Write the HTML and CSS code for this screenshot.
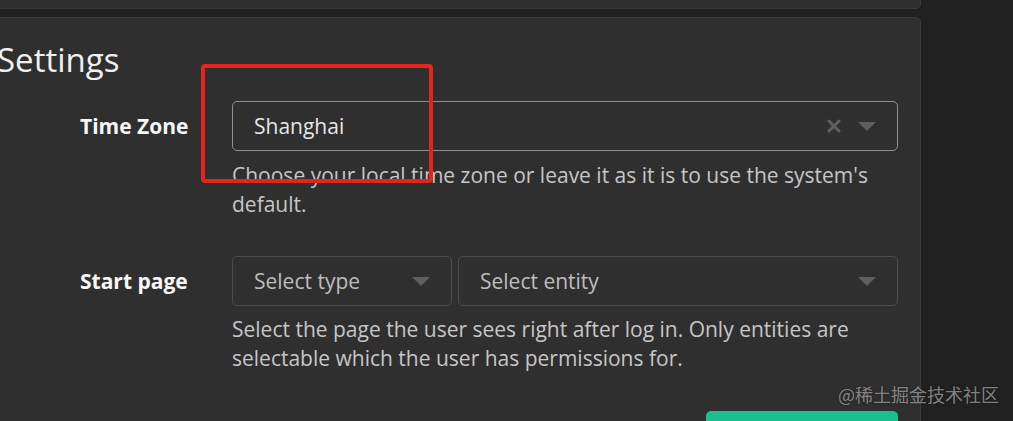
FILE: index.html
```html
<!DOCTYPE html>
<html>
<head>
<meta charset="utf-8">
<link rel="stylesheet" href="styles.css">
</head>
<body>
<div class="page">
  <div class="card card-top"></div>
  <div class="card card-settings">
    <h2 class="title">Settings</h2>
    <div class="form">
      <div class="row">
        <div class="label">Time Zone</div>
        <div class="field">
          <div class="select select-tz">
            <span class="value">Shanghai</span>
            <span class="icons">
              <svg class="clear" width="14" height="14" viewBox="0 0 14 14"><path d="M2 2 L12 12 M12 2 L2 12" stroke="#5f5f5f" stroke-width="3" stroke-linecap="round"/></svg>
              <svg class="caret" width="18" height="9" viewBox="0 0 18 9"><path d="M0 0 H18 L9 9 Z" fill="#5f5f5f"/></svg>
            </span>
          </div>
          <p class="help">Choose your local time zone or leave it as it is to use the system's default.</p>
        </div>
      </div>
      <div class="row row-start">
        <div class="label">Start page</div>
        <div class="field">
          <div class="selects">
            <div class="select select-type">
              <span class="placeholder">Select type</span>
              <svg class="caret" width="18" height="9" viewBox="0 0 18 9"><path d="M0 0 H18 L9 9 Z" fill="#5f5f5f"/></svg>
            </div>
            <div class="select select-entity">
              <span class="placeholder">Select entity</span>
              <svg class="caret" width="18" height="9" viewBox="0 0 18 9"><path d="M0 0 H18 L9 9 Z" fill="#5f5f5f"/></svg>
            </div>
          </div>
          <p class="help help-start">Select the page the user sees right after log in. Only entities are selectable which the user has permissions for.</p>
        </div>
      </div>
      <div class="actions">
        <button class="btn-save"></button>
      </div>
    </div>
    <div class="highlight"></div>
  </div>
</div>
<div class="watermark">@稀土掘金技术社区</div>
</body>
</html>
```

FILE: styles.css
```css
html, body {
  margin: 0;
  padding: 0;
}
body {
  background: #212121;
  width: 1013px;
  height: 421px;
  overflow: hidden;
  position: relative;
  font-family: "Open Sans", "Noto Sans", sans-serif;
}
.page {
  width: 942px;
  margin-left: -21px;
  display: flex;
  flex-direction: column;
  gap: 8px;
  margin-top: -40px;
}
.card {
  background: #2f2f2f;
  border: 1px solid #3a3a3a;
  border-radius: 5px;
  box-sizing: border-box;
}
.card-top {
  height: 49px;
}
.card-settings {
  position: relative;
  padding: 19px 22px 0 18px;
  height: 460px;
}
.title {
  margin: 0;
  font-weight: 400;
  font-size: 33px;
  line-height: 46px;
  color: #f0f0f0;
  margin-left: -1px;
}
.form {
  margin-top: 18px;
  padding-left: 82px;
}
.row {
  display: grid;
  grid-template-columns: 152px 666px;
}
.row-start {
  margin-top: 37px;
}
.label {
  font-weight: 700;
  font-size: 21px;
  color: #f7f7f7;
  height: 50px;
  line-height: 50px;
}
.select {
  box-sizing: border-box;
  height: 50px;
  border: 1px solid #4c4c4c;
  border-radius: 5px;
  display: flex;
  align-items: center;
  justify-content: space-between;
  padding: 0 21px 0 21px;
  font-size: 21px;
}
.select-tz {
  border-color: #8e8e8e;
}
.value {
  color: #e6e6e6;
}
.placeholder {
  color: #bdbdbd;
}
.icons {
  display: flex;
  align-items: center;
  gap: 17px;
}
.selects {
  display: flex;
  gap: 6px;
}
.select-type {
  width: 220px;
}
.select-entity {
  flex: 1;
}
.help {
  margin: 10px 0 0 0;
  font-size: 21px;
  line-height: 29px;
  color: #c6c6c6;
}
.help-start {
  margin-top: 9px;
}
.actions {
  display: flex;
  justify-content: flex-end;
  margin-top: 38px;
}
.btn-save {
  width: 192px;
  height: 40px;
  border: none;
  border-radius: 5px;
  background: #1abf8e;
}
.highlight {
  position: absolute;
  left: 221px;
  top: 46px;
  width: 232px;
  height: 119px;
  box-sizing: border-box;
  border: 4px solid #e6241c;
  border-radius: 4px;
}
.watermark {
  position: absolute;
  left: 838px;
  top: 381px;
  font-family: "Noto Sans CJK SC", sans-serif;
  font-size: 18px;
  color: rgba(200, 200, 200, 0.62);
  text-shadow: 0 0 2px rgba(0,0,0,0.5);
  white-space: nowrap;
}
```
